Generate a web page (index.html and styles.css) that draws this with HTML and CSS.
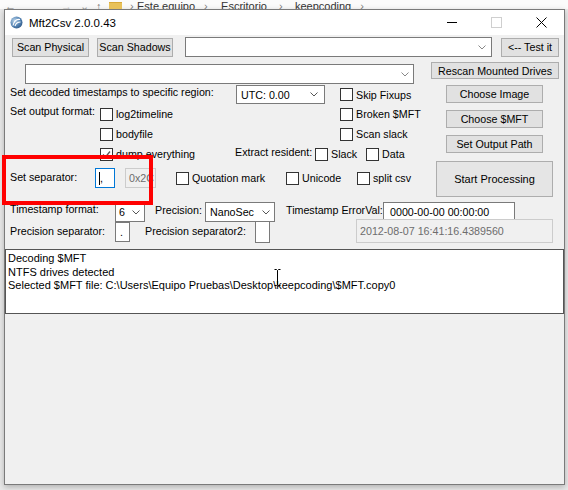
FILE: index.html
```html
<!DOCTYPE html>
<html>
<head>
<meta charset="utf-8">
<title>Mft2Csv 2.0.0.43</title>
<link rel="stylesheet" href="styles.css">
</head>
<body>
<div class="crumbs">
  <span class="nav n1">←</span>
  <span class="nav n2">→</span>
  <span class="nav n3">⌄</span>
  <span class="nav n4">↑</span>
  <span class="folder"></span>
  <span class="crumb sep s1">›</span>
  <span class="crumb c2">Este equipo</span>
  <span class="crumb sep s2">›</span>
  <span class="crumb c4">Escritorio</span>
  <span class="crumb sep s3">›</span>
  <span class="crumb c6">keepcoding</span>
  <span class="crumb sep s4">›</span>
</div>
<div class="window">
  <div class="titlebar">
    <svg class="appicon" width="13" height="13" viewBox="0 0 13 13">
      <defs>
        <radialGradient id="g" cx="0.35" cy="0.35" r="0.8">
          <stop offset="0" stop-color="#b9d3ea"/>
          <stop offset="0.6" stop-color="#4f7fb0"/>
          <stop offset="1" stop-color="#2a4f7a"/>
        </radialGradient>
      </defs>
      <circle cx="6.5" cy="6.5" r="6" fill="url(#g)"/>
      <path d="M3 9.5 C4 5 7 3 10 3.5 M5 10 C6 7 8 6 10.5 6" stroke="#fff" stroke-width="1.1" fill="none"/>
    </svg>
    <span class="title">Mft2Csv 2.0.0.43</span>
    <div class="tb-controls">
      <span class="tb-cell"><span class="tb-min"></span></span>
      <span class="tb-cell"><span class="tb-max"></span></span>
      <span class="tb-cell">
        <svg width="11" height="11" viewBox="0 0 11 11"><path d="M0.5 0.5 L10.5 10.5 M10.5 0.5 L0.5 10.5" stroke="#000" stroke-width="1"/></svg>
      </span>
    </div>
  </div>
  <div class="client">
    <div class="row row1">
      <div class="btn b-physical">Scan Physical</div>
      <div class="btn b-shadows">Scan Shadows</div>
      <div class="combo c-main">
        <svg class="chev" width="8" height="5" viewBox="0 0 8 5"><path d="M0.5 0.5 L4 4 L7.5 0.5" stroke="#888" fill="none"/></svg>
      </div>
      <div class="btn b-test">&lt;-- Test it</div>
    </div>

    <div class="mid">
      <div class="left">
        <div class="combo c-drives">
          <svg class="chev" width="8" height="5" viewBox="0 0 8 5"><path d="M0.5 0.5 L4 4 L7.5 0.5" stroke="#888" fill="none"/></svg>
        </div>

        <div class="row r1">
          <span class="lbl w-region up">Set decoded timestamps to specific region:</span>
          <div class="combo c-utc"><span>UTC: 0.00</span>
            <svg class="chev" width="8" height="5" viewBox="0 0 8 5"><path d="M0.5 0.5 L4 4 L7.5 0.5" stroke="#555" fill="none"/></svg>
          </div>
          <label class="cb cb-skip"><span class="box"></span>Skip Fixups</label>
        </div>

        <div class="row r2">
          <span class="lbl w-format up">Set output format:</span>
          <label class="cb w240"><span class="box"></span>log2timeline</label>
          <label class="cb"><span class="box"></span>Broken $MFT</label>
        </div>

        <div class="row r3">
          <label class="cb w240 ind90"><span class="box"></span>bodyfile</label>
          <label class="cb"><span class="box"></span>Scan slack</label>
        </div>

        <div class="row r4">
          <label class="cb w135 ind90"><span class="box checked">
            <svg width="11" height="11" viewBox="0 0 11 11"><path d="M2 5.5 L4.5 8 L9 2.5" stroke="#555" stroke-width="1.3" fill="none"/></svg>
          </span>dump everything</label>
          <span class="lbl w-extract up2">Extract resident:</span>
          <label class="cb w51"><span class="box"></span>Slack</label>
          <label class="cb"><span class="box"></span>Data</label>
        </div>

        <div class="row r5">
          <span class="lbl w-sep">Set separator:</span>
          <div class="tb tb-sep"><span class="caret"></span><span class="comma">,</span></div>
          <div class="tb tb-hex disabled">0x2C</div>
          <label class="cb w110 ml20"><span class="box"></span>Quotation mark</label>
          <label class="cb w71"><span class="box"></span>Unicode</label>
          <label class="cb"><span class="box"></span>split csv</label>
        </div>
      </div>

      <div class="right">
        <div class="btn b-rescan">Rescan Mounted Drives</div>
        <div class="btn b-side b-image">Choose Image</div>
        <div class="btn b-side">Choose $MFT</div>
        <div class="btn b-side">Set Output Path</div>
        <div class="btn b-start">Start Processing</div>
      </div>
    </div>

    <div class="row r6">
      <span class="lbl w105">Timestamp format:</span>
      <div class="combo c-fmt"><span>6</span>
        <svg class="chev" width="8" height="5" viewBox="0 0 8 5"><path d="M0.5 0.5 L4 4 L7.5 0.5" stroke="#555" fill="none"/></svg>
      </div>
      <span class="lbl w-prec">Precision:</span>
      <div class="combo c-prec"><span>NanoSec</span>
        <svg class="chev" width="8" height="5" viewBox="0 0 8 5"><path d="M0.5 0.5 L4 4 L7.5 0.5" stroke="#555" fill="none"/></svg>
      </div>
      <span class="lbl w-err">Timestamp ErrorVal:</span>
      <div class="tb tb-err">0000-00-00 00:00:00</div>
    </div>

    <div class="row r7">
      <span class="lbl w105">Precision separator:</span>
      <div class="tb tb-ps1">.</div>
      <span class="lbl w-ps2">Precision separator2:</span>
      <div class="tb tb-ps2"></div>
      <div class="tb tb-date disabled">2012-08-07 16:41:16.4389560</div>
    </div>

    <div class="log">
      <div>Decoding $MFT</div>
      <div>NTFS drives detected</div>
      <div>Selected $MFT file: C:\Users\Equipo Pruebas\Desktop\keepcoding\$MFT.copy0</div>
    </div>
  </div>
</div>
<div class="highlight"></div>
<svg class="ibeam" width="7" height="17" viewBox="0 0 7 17"><path d="M0.5 0.5 H2.5 L3.5 1.5 L4.5 0.5 H6.5 M3.5 1.5 V15.5 M0.5 16.5 H2.5 L3.5 15.5 L4.5 16.5 H6.5" stroke="#000" stroke-width="1" fill="none"/></svg>
</body>
</html>
```

FILE: styles.css
```css
html, body {
  margin: 0;
  padding: 0;
}
body {
  width: 568px;
  height: 490px;
  overflow: hidden;
  position: relative;
  background: #e9e9e9;
  font-family: "Liberation Sans", Arial, sans-serif;
  font-size: 10.7px;
  color: #000;
}

/* explorer strip behind the window */
.crumbs {
  height: 9px;
  overflow: hidden;
  background: #fbfbfb;
  display: flex;
  align-items: flex-start;
  font-size: 11px;
  line-height: 13px;
  color: #333;
  white-space: nowrap;
}
.nav { color: #777; flex: none; }
.n1 { margin-left: 5px; width: 10px; }
.n2 { margin-left: 46px; width: 10px; color: #bbb; }
.n3 { margin-left: 9px; width: 8px; color: #999; }
.n4 { margin-left: 8px; width: 8px; color: #777; }
.folder {
  flex: none;
  width: 13px;
  height: 9px;
  margin-left: 5px;
  margin-top: 2px;
  background: #e8c15a;
  border-top: 1px solid #d8a93a;
}
.crumb { flex: none; }
.sep { color: #777; width: 5px; }
.s1 { margin-left: 8px; }
.c2 { margin-left: 2px; }
.s2 { margin-left: 9px; }
.c4 { margin-left: 12px; }
.s3 { margin-left: 12px; }
.c6 { margin-left: 11px; }
.s4 { margin-left: 9px; }

/* window */
.window {
  margin-left: 4px;
  width: 561px;
  height: 476px;
  box-sizing: border-box;
  border: 1px solid #7a7a7a;
  background: #f0f0f0;
  box-shadow: 0 2px 6px rgba(0, 0, 0, 0.25);
}
.titlebar {
  height: 25px;
  background: #fff;
  display: flex;
  align-items: center;
}
.appicon {
  margin-left: 5px;
  flex: none;
}
.title {
  margin-left: 6px;
  font-size: 11.5px;
  color: #000;
}
.tb-controls {
  margin-left: auto;
  display: flex;
  height: 25px;
}
.tb-cell {
  width: 45px;
  display: flex;
  align-items: center;
  justify-content: center;
}
.tb-min {
  width: 10px;
  height: 1px;
  background: #000;
}
.tb-max {
  width: 9px;
  height: 9px;
  border: 1px solid #cfcfcf;
}

.client {
  height: 449px;
}

.row {
  display: flex;
  align-items: center;
}

/* generic controls */
.btn {
  display: flex;
  align-items: center;
  justify-content: center;
  box-sizing: border-box;
  background: #e1e1e1;
  border: 1px solid #adadad;
  white-space: nowrap;
  flex: none;
}
.combo {
  display: flex;
  align-items: center;
  box-sizing: border-box;
  background: #fff;
  border: 1px solid #7a7a7a;
  padding-left: 3px;
  flex: none;
}
.chev {
  margin-left: auto;
  margin-right: 5px;
  flex: none;
}
.tb {
  display: flex;
  align-items: center;
  box-sizing: border-box;
  background: #fff;
  border: 1px solid #7a7a7a;
  padding-left: 3px;
  overflow: hidden;
  white-space: nowrap;
  flex: none;
}
.tb.disabled {
  background: #f0f0f0;
  border-color: #cccccc;
  color: #6d6d6d;
}
.lbl {
  flex: none;
  white-space: nowrap;
}
.up { margin-bottom: 6px; }
.up2 { margin-bottom: 4px; }
.cb {
  display: flex;
  align-items: center;
  gap: 3px;
  white-space: nowrap;
  flex: none;
}
.box {
  width: 13px;
  height: 13px;
  box-sizing: border-box;
  border: 1px solid #333;
  background: #fff;
  display: flex;
  align-items: center;
  justify-content: center;
  flex: none;
}

/* row 1 */
.row1 {
  margin-top: 2px;
  height: 20px;
}
.b-physical { margin-left: 7px; width: 77px; height: 19px; }
.b-shadows { margin-left: 8px; width: 76px; height: 19px; }
.c-main { margin-left: 12px; width: 307px; height: 20px; }
.b-test { margin-left: 9px; width: 58px; height: 19px; }

/* middle block */
.mid {
  display: flex;
  height: 140px;
}
.left {
  width: 425px;
  flex: none;
}
.right {
  display: flex;
  flex-direction: column;
  align-items: flex-start;
}
.c-drives {
  margin-top: 7px;
  margin-left: 20px;
  width: 389px;
  height: 20px;
}
.c-drives .chev { margin-right: 4px; }

.r1, .r2, .r3, .r4, .r5, .r6, .r7 { padding-left: 5px; }
.r1 { margin-top: 1px; height: 19px; }
.r2, .r3, .r4 { height: 20px; }
.r5 { height: 28px; }

.w-region { width: 226px; }
.c-utc { width: 89px; height: 19px; padding-left: 4px; }
.c-utc .chev { margin-right: 6px; }
.cb-skip { margin-left: 15px; }
.w-format { width: 90px; }
.w240 { width: 240px; }
.w135 { width: 135px; }
.w110 { width: 110px; }
.w71 { width: 71px; }
.w51 { width: 51px; }
.ind90 { margin-left: 90px; }
.ml20 { margin-left: 20px; }
.w-extract { width: 80px; }
.w-sep { width: 85px; margin-bottom: 2px; }

.tb-sep {
  width: 20px;
  height: 20px;
  border-color: #0078d7;
  padding-left: 3px;
}
.caret {
  width: 1px;
  height: 13px;
  background: #000;
}
.comma {
  margin-left: 0;
}
.tb-hex {
  margin-left: 10px;
  width: 31px;
  height: 20px;
}

/* right column buttons */
.b-rescan { margin-top: 5px; margin-left: 1px; width: 128px; height: 17px; }
.b-side { margin-top: 7px; margin-left: 16px; width: 97px; height: 18px; }
.b-image { margin-top: 6px; }
.b-start {
  margin-top: 8px;
  margin-left: 6px;
  width: 117px;
  height: 36px;
  background: #e5e5e5;
  font-size: 11px;
}

/* timestamp rows */
.r6 {
  margin-top: 5px;
  height: 20px;
}
.w105 { width: 105px; }
.c-fmt { width: 30px; height: 20px; padding-left: 3px; }
.c-fmt .chev { margin-right: 4px; }
.w-prec { margin-left: 10px; width: 50px; margin-bottom: 4px; }
.c-prec { width: 70px; height: 20px; padding-left: 4px; }
.c-prec .chev { margin-right: 4px; }
.w-err { margin-left: 11px; width: 97px; margin-bottom: 4px; }
.tb-err { width: 132px; height: 20px; padding-left: 6px; }
.r6 .w105 { margin-bottom: 6px; }

.r7 {
  margin-top: -3px;
  height: 24px;
}
.tb-ps1 { width: 15px; height: 20px; padding-left: 4px; margin-top: 2px; }
.w-ps2 { margin-left: 15px; width: 110px; }
.tb-ps2 { width: 15px; height: 22px; margin-top: 2px; }
.tb-date { margin-left: 86px; width: 197px; height: 24px; padding-left: 3px; }

/* log */
.log {
  margin-top: 6px;
  height: 65px;
  box-sizing: border-box;
  border: 1px solid #555;
  background: #fff;
  padding: 2px 2px 0 2px;
  font-size: 11px;
  line-height: 13.5px;
  white-space: nowrap;
  overflow: hidden;
}

/* overlays */
.highlight {
  position: absolute;
  left: 2px;
  top: 155px;
  width: 151px;
  height: 50px;
  box-sizing: border-box;
  border: 4px solid #ff0000;
}
.ibeam {
  position: absolute;
  left: 274px;
  top: 269px;
}
```
